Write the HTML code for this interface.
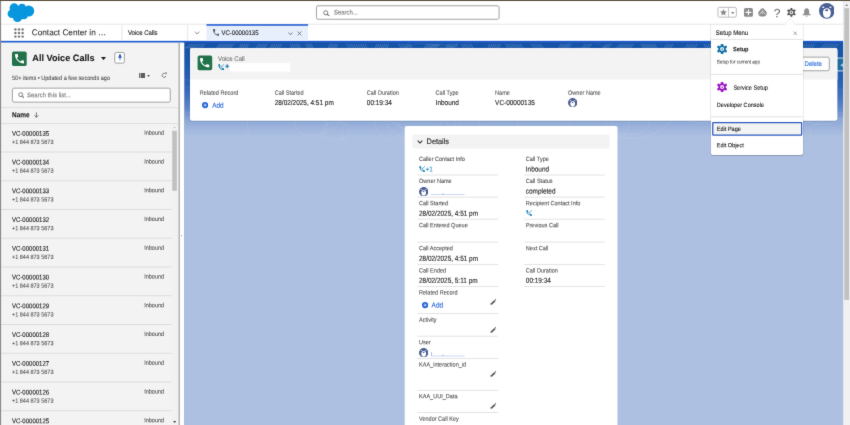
<!DOCTYPE html>
<html lang="en">
<head>
<meta charset="utf-8">
<title>VC-00000135 | Voice Call | Salesforce</title>
<style>
html,body{margin:0;padding:0;}
body{width:850px;height:425px;overflow:hidden;background:#adc0e1;font-family:"Liberation Sans",Arial,Helvetica,sans-serif;}
#app{position:relative;filter:url(#soft);width:850px;height:425px;overflow:hidden;background:#adc0e1;}
ul,li{margin:0;padding:0;list-style:none;}
.b{position:absolute;display:block;}
.t{position:absolute;display:block;line-height:1;white-space:nowrap;transform-origin:0 0;-webkit-text-stroke:0.09px currentColor;}
</style>
</head>
<body>
<svg class="b" width="0" height="0" aria-hidden="true"><defs><filter id="soft" x="0" y="0" width="100%" height="100%" color-interpolation-filters="sRGB"><feConvolveMatrix order="3" kernelMatrix="0.015 0.065 0.015 0.065 0.68 0.065 0.015 0.065 0.015" divisor="1" edgeMode="duplicate" preserveAlpha="true"/></filter></defs></svg>
<div id="app">
<main id="record-page">
<div class="b" style="left:184px;top:42px;width:660px;height:383px;background:linear-gradient(to bottom,#1653a6 0,#1855a7 8px,#1d59aa 22px,#2d64b4 44px,#4674be 56px,#5f84c8 66px,#8ea9d6 79px,#a1b6dd 87px,#adc0e1 95px,#adc0e1 100%);"></div>
<svg class="b" style="left:184px;top:42px;" width="660" height="100" viewBox="0 0 660 100"><g fill="none" stroke="#fff" stroke-opacity="0.36" stroke-width="0.5"><path d="M2.0 6.4 l3.8 -4.6"/><path d="M4.2 6.4 l3.8 -4.6"/><path d="M6.4 6.4 l3.8 -4.6"/><path d="M8.5 6.4 l3.8 -4.6"/><path d="M10.7 6.4 l3.8 -4.6"/><path d="M12.9 6.4 l3.8 -4.6"/><path d="M15.1 6.4 l3.8 -4.6"/><path d="M17.2 6.4 l3.8 -4.6"/><path d="M31.9 6.4 l4.4 -4.6"/><path d="M33.6 6.4 l4.4 -4.6"/><path d="M35.3 6.4 l4.4 -4.6"/><path d="M37.1 6.4 l4.4 -4.6"/><path d="M38.8 6.4 l4.4 -4.6"/><path d="M40.5 6.4 l4.4 -4.6"/><path d="M42.2 6.4 l4.4 -4.6"/><path d="M43.9 6.4 l4.4 -4.6"/><path d="M45.6 6.4 l4.4 -4.6"/><path d="M55.5 6.4 l1.8 -4.6"/><path d="M57.3 6.4 l1.8 -4.6"/><path d="M59.1 6.4 l1.8 -4.6"/><path d="M60.9 6.4 l1.8 -4.6"/><path d="M62.7 6.4 l1.8 -4.6"/><path d="M71.9 6.4 l3.2 -4.6"/><path d="M73.9 6.4 l3.2 -4.6"/><path d="M76.0 6.4 l3.2 -4.6"/><path d="M78.0 6.4 l3.2 -4.6"/><path d="M80.0 6.4 l3.2 -4.6"/><path d="M86.2 6.4 l2.4 -4.6"/><path d="M88.5 6.4 l2.4 -4.6"/><path d="M90.7 6.4 l2.4 -4.6"/><path d="M93.0 6.4 l2.4 -4.6"/><path d="M95.2 6.4 l2.4 -4.6"/><path d="M108.3 6.4 l-2.0 -4.6"/><path d="M110.4 6.4 l-2.0 -4.6"/><path d="M112.5 6.4 l-2.0 -4.6"/><path d="M114.6 6.4 l-2.0 -4.6"/><path d="M116.6 6.4 l-2.0 -4.6"/><path d="M123.8 6.4 l-2.2 -4.6"/><path d="M125.7 6.4 l-2.2 -4.6"/><path d="M127.5 6.4 l-2.2 -4.6"/><path d="M129.3 6.4 l-2.2 -4.6"/><path d="M144.0 6.4 l2.5 -4.6"/><path d="M145.8 6.4 l2.5 -4.6"/><path d="M147.6 6.4 l2.5 -4.6"/><path d="M149.5 6.4 l2.5 -4.6"/><path d="M151.3 6.4 l2.5 -4.6"/><path d="M165.0 6.4 l-2.2 -4.6"/><path d="M167.3 6.4 l-2.2 -4.6"/><path d="M169.5 6.4 l-2.2 -4.6"/><path d="M171.8 6.4 l-2.2 -4.6"/><path d="M174.1 6.4 l-2.2 -4.6"/><path d="M176.4 6.4 l-2.2 -4.6"/><path d="M178.7 6.4 l-2.2 -4.6"/><path d="M180.9 6.4 l-2.2 -4.6"/><path d="M183.2 6.4 l-2.2 -4.6"/><path d="M191.3 6.4 l1.7 -4.6"/><path d="M193.2 6.4 l1.7 -4.6"/><path d="M195.2 6.4 l1.7 -4.6"/><path d="M197.1 6.4 l1.7 -4.6"/><path d="M199.1 6.4 l1.7 -4.6"/><path d="M201.0 6.4 l1.7 -4.6"/><path d="M203.0 6.4 l1.7 -4.6"/><path d="M217.3 6.4 l-2.6 -4.6"/><path d="M219.5 6.4 l-2.6 -4.6"/><path d="M221.7 6.4 l-2.6 -4.6"/><path d="M223.9 6.4 l-2.6 -4.6"/><path d="M226.1 6.4 l-2.6 -4.6"/><path d="M228.3 6.4 l-2.6 -4.6"/><path d="M239.8 6.4 l3.7 -4.6"/><path d="M241.5 6.4 l3.7 -4.6"/><path d="M243.2 6.4 l3.7 -4.6"/><path d="M245.0 6.4 l3.7 -4.6"/><path d="M246.7 6.4 l3.7 -4.6"/><path d="M248.5 6.4 l3.7 -4.6"/><path d="M250.2 6.4 l3.7 -4.6"/><path d="M251.9 6.4 l3.7 -4.6"/><path d="M260.9 6.4 l3.7 -4.6"/><path d="M262.7 6.4 l3.7 -4.6"/><path d="M264.5 6.4 l3.7 -4.6"/><path d="M266.3 6.4 l3.7 -4.6"/><path d="M268.1 6.4 l3.7 -4.6"/><path d="M269.9 6.4 l3.7 -4.6"/><path d="M280.0 6.4 l-2.4 -4.6"/><path d="M282.3 6.4 l-2.4 -4.6"/><path d="M284.5 6.4 l-2.4 -4.6"/><path d="M286.8 6.4 l-2.4 -4.6"/><path d="M289.0 6.4 l-2.4 -4.6"/><path d="M303.9 6.4 l1.7 -4.6"/><path d="M306.0 6.4 l1.7 -4.6"/><path d="M308.2 6.4 l1.7 -4.6"/><path d="M310.4 6.4 l1.7 -4.6"/><path d="M312.5 6.4 l1.7 -4.6"/><path d="M314.7 6.4 l1.7 -4.6"/><path d="M324.2 6.4 l-3.0 -4.6"/><path d="M326.3 6.4 l-3.0 -4.6"/><path d="M328.4 6.4 l-3.0 -4.6"/><path d="M330.6 6.4 l-3.0 -4.6"/><path d="M332.7 6.4 l-3.0 -4.6"/><path d="M334.8 6.4 l-3.0 -4.6"/><path d="M336.9 6.4 l-3.0 -4.6"/><path d="M339.1 6.4 l-3.0 -4.6"/><path d="M350.8 6.4 l-3.9 -4.6"/><path d="M353.1 6.4 l-3.9 -4.6"/><path d="M355.3 6.4 l-3.9 -4.6"/><path d="M357.6 6.4 l-3.9 -4.6"/><path d="M359.8 6.4 l-3.9 -4.6"/><path d="M374.6 6.4 l2.7 -4.6"/><path d="M376.6 6.4 l2.7 -4.6"/><path d="M378.6 6.4 l2.7 -4.6"/><path d="M380.6 6.4 l2.7 -4.6"/><path d="M382.6 6.4 l2.7 -4.6"/><path d="M384.6 6.4 l2.7 -4.6"/><path d="M397.6 6.4 l3.8 -4.6"/><path d="M399.8 6.4 l3.8 -4.6"/><path d="M402.0 6.4 l3.8 -4.6"/><path d="M404.2 6.4 l3.8 -4.6"/><path d="M418.1 6.4 l4.4 -4.6"/><path d="M419.8 6.4 l4.4 -4.6"/><path d="M421.6 6.4 l4.4 -4.6"/><path d="M423.3 6.4 l4.4 -4.6"/><path d="M432.2 6.4 l4.4 -4.6"/><path d="M434.1 6.4 l4.4 -4.6"/><path d="M436.0 6.4 l4.4 -4.6"/><path d="M437.9 6.4 l4.4 -4.6"/><path d="M439.8 6.4 l4.4 -4.6"/><path d="M441.7 6.4 l4.4 -4.6"/><path d="M443.6 6.4 l4.4 -4.6"/><path d="M445.5 6.4 l4.4 -4.6"/><path d="M459.7 6.4 l-2.5 -4.6"/><path d="M461.6 6.4 l-2.5 -4.6"/><path d="M463.5 6.4 l-2.5 -4.6"/><path d="M465.4 6.4 l-2.5 -4.6"/><path d="M467.3 6.4 l-2.5 -4.6"/><path d="M469.2 6.4 l-2.5 -4.6"/><path d="M471.1 6.4 l-2.5 -4.6"/><path d="M472.9 6.4 l-2.5 -4.6"/><path d="M480.4 6.4 l2.1 -4.6"/><path d="M482.6 6.4 l2.1 -4.6"/><path d="M484.7 6.4 l2.1 -4.6"/><path d="M486.8 6.4 l2.1 -4.6"/><path d="M501.9 6.4 l1.8 -4.6"/><path d="M504.2 6.4 l1.8 -4.6"/><path d="M506.4 6.4 l1.8 -4.6"/><path d="M508.7 6.4 l1.8 -4.6"/><path d="M511.0 6.4 l1.8 -4.6"/><path d="M522.1 6.4 l-2.3 -4.6"/><path d="M524.2 6.4 l-2.3 -4.6"/><path d="M526.2 6.4 l-2.3 -4.6"/><path d="M528.3 6.4 l-2.3 -4.6"/><path d="M530.3 6.4 l-2.3 -4.6"/><path d="M532.4 6.4 l-2.3 -4.6"/><path d="M534.5 6.4 l-2.3 -4.6"/><path d="M548.0 6.4 l2.9 -4.6"/><path d="M549.7 6.4 l2.9 -4.6"/><path d="M551.4 6.4 l2.9 -4.6"/><path d="M553.2 6.4 l2.9 -4.6"/><path d="M554.9 6.4 l2.9 -4.6"/><path d="M556.6 6.4 l2.9 -4.6"/><path d="M558.4 6.4 l2.9 -4.6"/><path d="M572.3 6.4 l2.6 -4.6"/><path d="M574.2 6.4 l2.6 -4.6"/><path d="M576.0 6.4 l2.6 -4.6"/><path d="M577.8 6.4 l2.6 -4.6"/><path d="M592.5 6.4 l-3.5 -4.6"/><path d="M594.6 6.4 l-3.5 -4.6"/><path d="M596.8 6.4 l-3.5 -4.6"/><path d="M599.0 6.4 l-3.5 -4.6"/><path d="M601.2 6.4 l-3.5 -4.6"/><path d="M603.3 6.4 l-3.5 -4.6"/><path d="M605.5 6.4 l-3.5 -4.6"/><path d="M607.7 6.4 l-3.5 -4.6"/><path d="M614.8 6.4 l2.1 -4.6"/><path d="M617.0 6.4 l2.1 -4.6"/><path d="M619.2 6.4 l2.1 -4.6"/><path d="M621.4 6.4 l2.1 -4.6"/><path d="M623.6 6.4 l2.1 -4.6"/><path d="M625.8 6.4 l2.1 -4.6"/><path d="M628.0 6.4 l2.1 -4.6"/><path d="M636.9 6.4 l4.2 -4.6"/><path d="M639.2 6.4 l4.2 -4.6"/><path d="M641.5 6.4 l4.2 -4.6"/><path d="M643.8 6.4 l4.2 -4.6"/><path d="M646.0 6.4 l4.2 -4.6"/><path d="M648.3 6.4 l4.2 -4.6"/><path d="M650.6 6.4 l4.2 -4.6"/></g><g fill="none" stroke="#fff" stroke-opacity="0.11" stroke-width="0.7"><ellipse cx="321.9" cy="73.7" rx="27.4" ry="17.1" transform="rotate(-15 321.9 73.7)"/><ellipse cx="264.6" cy="21.2" rx="24.7" ry="15.4" transform="rotate(34 264.6 21.2)"/><ellipse cx="642.7" cy="64.4" rx="28.0" ry="17.5" transform="rotate(-11 642.7 64.4)"/><ellipse cx="50.6" cy="32.5" rx="35.7" ry="22.3" transform="rotate(26 50.6 32.5)"/><ellipse cx="235.7" cy="78.7" rx="35.5" ry="22.2" transform="rotate(14 235.7 78.7)"/><ellipse cx="441.5" cy="76.4" rx="24.3" ry="15.2" transform="rotate(14 441.5 76.4)"/><ellipse cx="181.0" cy="51.7" rx="35.3" ry="22.1" transform="rotate(13 181.0 51.7)"/><ellipse cx="189.8" cy="93.1" rx="32.1" ry="20.0" transform="rotate(6 189.8 93.1)"/><ellipse cx="-2.1" cy="57.2" rx="21.2" ry="13.3" transform="rotate(12 -2.1 57.2)"/><ellipse cx="304.8" cy="81.5" rx="32.0" ry="20.0" transform="rotate(21 304.8 81.5)"/><ellipse cx="226.6" cy="66.0" rx="34.5" ry="21.5" transform="rotate(23 226.6 66.0)"/><ellipse cx="228.0" cy="83.9" rx="38.1" ry="23.8" transform="rotate(13 228.0 83.9)"/><ellipse cx="653.8" cy="94.1" rx="28.5" ry="17.8" transform="rotate(2 653.8 94.1)"/><ellipse cx="103.0" cy="83.3" rx="39.9" ry="24.9" transform="rotate(-2 103.0 83.3)"/><ellipse cx="460.2" cy="72.8" rx="34.3" ry="21.4" transform="rotate(-23 460.2 72.8)"/><ellipse cx="520.7" cy="60.3" rx="32.5" ry="20.3" transform="rotate(-6 520.7 60.3)"/><ellipse cx="414.1" cy="77.7" rx="31.7" ry="19.8" transform="rotate(15 414.1 77.7)"/><ellipse cx="8.8" cy="22.4" rx="26.4" ry="16.5" transform="rotate(11 8.8 22.4)"/><ellipse cx="138.9" cy="69.7" rx="31.6" ry="19.7" transform="rotate(-32 138.9 69.7)"/><ellipse cx="310.7" cy="28.4" rx="15.9" ry="9.9" transform="rotate(-26 310.7 28.4)"/><ellipse cx="205.8" cy="24.3" rx="19.7" ry="12.3" transform="rotate(-33 205.8 24.3)"/><ellipse cx="306.4" cy="42.2" rx="31.0" ry="19.4" transform="rotate(6 306.4 42.2)"/><ellipse cx="151.7" cy="89.3" rx="14.4" ry="9.0" transform="rotate(-7 151.7 89.3)"/><ellipse cx="179.4" cy="44.9" rx="17.5" ry="11.0" transform="rotate(23 179.4 44.9)"/><ellipse cx="244.2" cy="11.2" rx="31.1" ry="19.4" transform="rotate(-28 244.2 11.2)"/><ellipse cx="360.8" cy="38.5" rx="30.2" ry="18.9" transform="rotate(32 360.8 38.5)"/><ellipse cx="546.6" cy="45.7" rx="36.5" ry="22.8" transform="rotate(10 546.6 45.7)"/><ellipse cx="241.2" cy="20.8" rx="30.6" ry="19.1" transform="rotate(4 241.2 20.8)"/><ellipse cx="640.9" cy="95.1" rx="31.0" ry="19.3" transform="rotate(-10 640.9 95.1)"/><ellipse cx="597.6" cy="8.1" rx="17.3" ry="10.8" transform="rotate(5 597.6 8.1)"/><ellipse cx="408.3" cy="20.7" rx="31.5" ry="19.7" transform="rotate(27 408.3 20.7)"/><ellipse cx="245.6" cy="46.9" rx="20.6" ry="12.8" transform="rotate(-15 245.6 46.9)"/><ellipse cx="651.3" cy="42.2" rx="40.5" ry="25.3" transform="rotate(29 651.3 42.2)"/><ellipse cx="395.2" cy="31.4" rx="41.1" ry="25.7" transform="rotate(-0 395.2 31.4)"/></g></svg>
<section id="record-header" aria-label="Voice Call">
<svg class="b" style="left:188px;top:46px" width="652" height="77"><rect x="1.7" y="2.3" width="648" height="73.4" rx="2.3" fill="rgba(0,0,0,0.1)"/><rect x="2" y="2.1" width="647.4" height="72.7" rx="2" fill="#fff"/></svg>
<svg class="b" style="left:188px;top:46px" width="652" height="36"><path d="M4 2.1 H647.4 A2 2 0 0 1 649.4 4.1 V33.4 H2 V4.1 A2 2 0 0 1 4 2.1 Z" fill="#f3f3f3"/></svg>
<svg class="b" style="left:195px;top:53px" width="20" height="20"><rect x="2.6" y="2.6" width="14.6" height="14.6" rx="1.8" fill="#22714a"/></svg>
<svg class="b" style="left:200.33px;top:58.33px;" width="9.34" height="9.34" viewBox="3 3 18 18"><path fill="#fff" d="M6.6 10.8c1.4 2.8 3.8 5.1 6.6 6.6l2.2-2.2c.3-.3.7-.4 1-.2 1.1.4 2.3.6 3.6.6.6 0 1 .4 1 1V20c0 .6-.4 1-1 1C10.600 21 3 13.400 3 4c0-.6.4-1 1-1h3.500c.6 0 1 .4 1 1 0 1.300.2 2.500.6 3.600.1.300 0 .7-.3 1l-2.200 2.200z"/></svg>
<span class="t" style="left:218px;top:56px;font-size:6px;color:#747474;transform:translate(0px,-0.6px) rotate(.03deg) scale(1,1.12);">Voice Call</span>
<svg class="b" style="left:217.8px;top:63.8px;" width="6.4" height="6.4" viewBox="2 2 20 20"><path fill="#0b7ab0" d="M6.6 10.8c1.4 2.8 3.8 5.1 6.6 6.6l2.2-2.2c.3-.3.7-.4 1-.2 1.1.4 2.3.6 3.6.6.6 0 1 .4 1 1V20c0 .6-.4 1-1 1C10.600 21 3 13.400 3 4c0-.6.4-1 1-1h3.500c.6 0 1 .4 1 1 0 1.300.2 2.500.6 3.600.1.300 0 .7-.3 1l-2.200 2.200z"/><path d="M21.500 2.500 L11.500 12.500" fill="none" stroke="#0b7ab0" stroke-width="2.600" stroke-opacity="0.8"/><path d="M11 7.500 V13 H16.500" fill="none" stroke="#0b7ab0" stroke-width="1.800" stroke-opacity="0.6"/></svg>
<svg class="b" style="left:224.7px;top:64.3px;" width="4.4" height="4.4" viewBox="0 0 10 10"><path d="M5 0.500 V9.500 M0.500 5 H9.500" stroke="#0b7ab0" stroke-width="2.400" fill="none"/></svg>
<svg class="b" style="left:227px;top:61px" width="65" height="13"><rect x="2.8" y="2.1" width="60.2" height="8.5" fill="#fff"/></svg>
<span class="t" style="left:199px;top:90px;font-size:5.55px;color:#525252;transform:translate(0.8px,0.22px) rotate(.03deg) scale(1,1.12);">Related Record</span>
<span class="t" style="left:274px;top:90px;font-size:5.55px;color:#525252;transform:translate(0.7px,0.22px) rotate(.03deg) scale(1,1.12);">Call Started</span>
<span class="t" style="left:274px;top:100px;font-size:6.45px;color:#181818;transform:translate(0.7px,-0.6px) rotate(.03deg) scale(1,1.12);">28/02/2025, 4:51 pm</span>
<span class="t" style="left:366px;top:90px;font-size:5.55px;color:#525252;transform:translate(0.8px,0.22px) rotate(.03deg) scale(1,1.12);">Call Duration</span>
<span class="t" style="left:366px;top:100px;font-size:6.45px;color:#181818;transform:translate(0.8px,-0.6px) rotate(.03deg) scale(1,1.12);">00:19:34</span>
<span class="t" style="left:435px;top:90px;font-size:5.55px;color:#525252;transform:translate(0.6px,0.22px) rotate(.03deg) scale(1,1.12);">Call Type</span>
<span class="t" style="left:435px;top:100px;font-size:6.45px;color:#181818;transform:translate(0.6px,-0.6px) rotate(.03deg) scale(1,1.12);">Inbound</span>
<span class="t" style="left:495px;top:90px;font-size:5.55px;color:#525252;transform:translate(0.1px,0.22px) rotate(.03deg) scale(1,1.12);">Name</span>
<span class="t" style="left:495px;top:100px;font-size:6.45px;color:#181818;transform:translate(0.1px,-0.6px) rotate(.03deg) scale(1,1.12);">VC-00000135</span>
<span class="t" style="left:568px;top:90px;font-size:5.55px;color:#525252;transform:translate(0px,0.22px) rotate(.03deg) scale(1,1.12);">Owner Name</span>
<svg class="b" style="left:202px;top:102.4px;" width="6.2" height="6.2" viewBox="0 0 20 20"><circle cx="10" cy="10" r="10" fill="#1f5fd6"/><path d="M10 4.800v10.400M4.800 10h10.400" stroke="#fff" stroke-width="2.200" fill="none"/></svg>
<span class="t" style="left:212px;top:102px;font-size:6.45px;color:#1f5fd6;transform:translate(0.2px,0.15px) rotate(.03deg) scale(1,1.12);">Add</span>
<svg class="b" style="left:568px;top:97.7px;" width="9.4" height="9.4" viewBox="0 0 100 100"><circle cx="50" cy="50" r="50" fill="#4a5f94"/><path d="M50 33 C67 33 75 43 75 62 C75 82 66 94 50 94 C34 94 25 82 25 62 C25 43 33 33 50 33Z" fill="#fff"/><ellipse cx="27" cy="27" rx="7" ry="4.500" fill="#fff"/><ellipse cx="73" cy="27" rx="7" ry="4.500" fill="#fff"/><ellipse cx="49" cy="46" rx="10.500" ry="6" fill="#4a5f94"/></svg>
<svg class="b" style="left:768px;top:54px" width="64" height="20"><rect x="2.45" y="3.15" width="58.8" height="13.6" rx="1.55" fill="#fff" stroke="#999999" stroke-width="0.9"/></svg>
<span class="t" style="left:804px;top:61px;font-size:6px;color:#2a6adc;transform:translate(0.6px,-0.6px) rotate(.03deg) scale(1,1.12);">Delete</span>
<svg class="b" style="left:833px;top:55px" width="13" height="19"><path d="M4.1 2.4 H10.2 V16.5 H4.1 A1.6 1.6 0 0 1 2.5 14.9 V4 A1.6 1.6 0 0 1 4.1 2.4 Z" fill="rgba(255,255,255,0.62)"/></svg>
<svg class="b" style="left:835px;top:56px" width="11" height="17"><rect x="2.6" y="2.7" width="5.6" height="11.5" fill="#1f6b9f"/></svg>
<svg class="b" style="left:840px;top:62.7px;" width="3" height="4.4" viewBox="0 0 8 10"><path d="M8 0 L0.500 5 L8 10Z" fill="#9cc3de"/></svg>
</section>
<section id="record-details" aria-label="Details">
<svg class="b" style="left:402px;top:124px" width="218" height="309"><rect x="2.3" y="2.2" width="213.6" height="305.7" rx="2.3" fill="rgba(0,0,0,0.1)"/><rect x="2.6" y="2" width="213" height="305" rx="2" fill="#fff"/></svg>
<svg class="b" style="left:410px;top:132px" width="202" height="19"><rect x="2.4" y="2.4" width="197.2" height="14.2" rx="1.8" fill="#f3f3f3"/></svg>
<svg class="b" style="left:416.7px;top:139.5px;" width="6" height="4" viewBox="0 0 10 7"><path d="M1 1.200 L5 5.400 L9 1.200" fill="none" stroke="#2a2a2a" stroke-width="1.8"/></svg>
<span class="t" style="left:426px;top:138px;font-size:7.35px;color:#181818;transform:translate(0.6px,-0.42px) rotate(.03deg) scale(1,1.07);">Details</span>
<span class="t" style="left:419px;top:157px;font-size:5.55px;color:#525252;transform:translate(0px,-0.43px) rotate(.03deg) scale(1,1.12);">Caller Contact Info</span>
<svg class="b" style="left:418.8px;top:165.55px;" width="6.2" height="6.2" viewBox="2 2 20 20"><path fill="#0b7ab0" d="M6.6 10.8c1.4 2.8 3.8 5.1 6.6 6.6l2.2-2.2c.3-.3.7-.4 1-.2 1.1.4 2.3.6 3.6.6.6 0 1 .4 1 1V20c0 .6-.4 1-1 1C10.600 21 3 13.400 3 4c0-.6.4-1 1-1h3.500c.6 0 1 .4 1 1 0 1.300.2 2.500.6 3.600.1.300 0 .7-.3 1l-2.200 2.200z"/><path d="M21.500 2.500 L11.500 12.500" fill="none" stroke="#0b7ab0" stroke-width="2.600" stroke-opacity="0.8"/><path d="M11 7.500 V13 H16.500" fill="none" stroke="#0b7ab0" stroke-width="1.800" stroke-opacity="0.6"/></svg>
<span class="t" style="left:425px;top:166px;font-size:6.3px;color:#2b8dc1;transform:translate(0.6px,-0.15px) rotate(.03deg) scale(1,1.12);">+1</span>
<svg class="b" style="left:415px;top:172px" width="85" height="6"><rect x="2.4" y="2.55" width="80.6" height="0.9" fill="#e0e0e0"/></svg>
<span class="t" style="left:419px;top:179px;font-size:5.55px;color:#525252;transform:translate(0px,-0.43px) rotate(.03deg) scale(1,1.12);">Owner Name</span>
<svg class="b" style="left:418.9px;top:186.7px;" width="9.4" height="9.4" viewBox="0 0 100 100"><circle cx="50" cy="50" r="50" fill="#4a5f94"/><path d="M50 33 C67 33 75 43 75 62 C75 82 66 94 50 94 C34 94 25 82 25 62 C25 43 33 33 50 33Z" fill="#fff"/><ellipse cx="27" cy="27" rx="7" ry="4.500" fill="#fff"/><ellipse cx="73" cy="27" rx="7" ry="4.500" fill="#fff"/><ellipse cx="49" cy="46" rx="10.500" ry="6" fill="#4a5f94"/></svg>
<svg class="b" style="left:429px;top:192px" width="38" height="5"><rect x="2" y="2.4" width="33.6" height="0.6" fill="#a9bdec"/></svg>
<svg class="b" style="left:440px;top:191px" width="6" height="6"><rect x="2.4" y="2.5" width="1.1" height="1.1" fill="#8ea6e4"/></svg>
<svg class="b" style="left:415px;top:194px" width="85" height="6"><rect x="2.4" y="2.65" width="80.6" height="0.9" fill="#e0e0e0"/></svg>
<span class="t" style="left:419px;top:201px;font-size:5.55px;color:#525252;transform:translate(0px,-0.33px) rotate(.03deg) scale(1,1.12);">Call Started</span>
<span class="t" style="left:419px;top:210px;font-size:6.45px;color:#181818;transform:translate(0px,0.05px) rotate(.03deg) scale(1,1.12);">28/02/2025, 4:51 pm</span>
<svg class="b" style="left:415px;top:216px" width="85" height="6"><rect x="2.4" y="2.75" width="80.6" height="0.9" fill="#e0e0e0"/></svg>
<span class="t" style="left:419px;top:223px;font-size:5.55px;color:#525252;transform:translate(0px,-0.23px) rotate(.03deg) scale(1,1.12);">Call Entered Queue</span>
<svg class="b" style="left:415px;top:239px" width="85" height="6"><rect x="2.4" y="2.65" width="80.6" height="0.9" fill="#e0e0e0"/></svg>
<span class="t" style="left:419px;top:246px;font-size:5.55px;color:#525252;transform:translate(0px,-0.33px) rotate(.03deg) scale(1,1.12);">Call Accepted</span>
<span class="t" style="left:419px;top:255px;font-size:6.45px;color:#181818;transform:translate(0px,0.25px) rotate(.03deg) scale(1,1.12);">28/02/2025, 4:51 pm</span>
<svg class="b" style="left:415px;top:261px" width="85" height="6"><rect x="2.4" y="2.95" width="80.6" height="0.9" fill="#e0e0e0"/></svg>
<span class="t" style="left:419px;top:268px;font-size:5.55px;color:#525252;transform:translate(0px,-0.03px) rotate(.03deg) scale(1,1.12);">Call Ended</span>
<span class="t" style="left:419px;top:277px;font-size:6.45px;color:#181818;transform:translate(0px,0.25px) rotate(.03deg) scale(1,1.12);">28/02/2025, 5:11 pm</span>
<svg class="b" style="left:415px;top:283px" width="85" height="6"><rect x="2.4" y="2.95" width="80.6" height="0.9" fill="#e0e0e0"/></svg>
<span class="t" style="left:419px;top:290px;font-size:5.55px;color:#525252;transform:translate(0px,-0.03px) rotate(.03deg) scale(1,1.12);">Related Record</span>
<svg class="b" style="left:421.8px;top:302.4px;" width="6.2" height="6.2" viewBox="0 0 20 20"><circle cx="10" cy="10" r="10" fill="#1f5fd6"/><path d="M10 4.800v10.400M4.800 10h10.400" stroke="#fff" stroke-width="2.200" fill="none"/></svg>
<span class="t" style="left:431px;top:302px;font-size:6.45px;color:#1f5fd6;transform:translate(0.6px,0px) rotate(.03deg) scale(1,1.12);">Add</span>
<svg class="b" style="left:489.5px;top:299.2px;" width="6.5" height="6.5" viewBox="0 0 20 20"><path d="M1.500 18.500 L2.800 13.200 L13.200 2.800 L17.200 6.800 L6.800 17.200Z" fill="#5c5c5c"/><path d="M14.400 1.600 L15.600 0.500 Q16.800 -0.200 17.900 0.800 L19.300 2.200 Q20.200 3.300 19.400 4.400 L18.400 5.600Z" fill="#5c5c5c"/></svg>
<svg class="b" style="left:415px;top:311px" width="85" height="6"><rect x="2.4" y="2.15" width="80.6" height="0.9" fill="#e0e0e0"/></svg>
<span class="t" style="left:419px;top:317px;font-size:5.55px;color:#525252;transform:translate(0px,0.17px) rotate(.03deg) scale(1,1.12);">Activity</span>
<svg class="b" style="left:489.5px;top:326.7px;" width="6.5" height="6.5" viewBox="0 0 20 20"><path d="M1.500 18.500 L2.800 13.200 L13.200 2.800 L17.200 6.800 L6.800 17.200Z" fill="#5c5c5c"/><path d="M14.400 1.600 L15.600 0.500 Q16.800 -0.200 17.900 0.800 L19.300 2.200 Q20.200 3.300 19.400 4.400 L18.400 5.600Z" fill="#5c5c5c"/></svg>
<svg class="b" style="left:415px;top:333px" width="85" height="6"><rect x="2.4" y="2.75" width="80.6" height="0.9" fill="#e0e0e0"/></svg>
<span class="t" style="left:419px;top:340px;font-size:5.55px;color:#525252;transform:translate(0px,-0.23px) rotate(.03deg) scale(1,1.12);">User</span>
<svg class="b" style="left:418.9px;top:348px;" width="9.4" height="9.4" viewBox="0 0 100 100"><circle cx="50" cy="50" r="50" fill="#4a5f94"/><path d="M50 33 C67 33 75 43 75 62 C75 82 66 94 50 94 C34 94 25 82 25 62 C25 43 33 33 50 33Z" fill="#fff"/><ellipse cx="27" cy="27" rx="7" ry="4.500" fill="#fff"/><ellipse cx="73" cy="27" rx="7" ry="4.500" fill="#fff"/><ellipse cx="49" cy="46" rx="10.500" ry="6" fill="#4a5f94"/></svg>
<svg class="b" style="left:429px;top:353px" width="38" height="6"><rect x="2" y="2.7" width="33.6" height="0.6" fill="#a9bdec"/></svg>
<svg class="b" style="left:429px;top:350px" width="5" height="8"><rect x="2" y="2" width="0.7" height="3.8" fill="#8ea6e4"/></svg>
<svg class="b" style="left:440px;top:352px" width="6" height="6"><rect x="2.4" y="2.8" width="1.1" height="1.1" fill="#8ea6e4"/></svg>
<svg class="b" style="left:415px;top:355px" width="85" height="6"><rect x="2.4" y="2.95" width="80.6" height="0.9" fill="#e0e0e0"/></svg>
<span class="t" style="left:419px;top:362px;font-size:5.55px;color:#525252;transform:translate(0px,-0.03px) rotate(.03deg) scale(1,1.12);">KAA_interaction_id</span>
<svg class="b" style="left:489.5px;top:370.6px;" width="6.5" height="6.5" viewBox="0 0 20 20"><path d="M1.500 18.500 L2.800 13.200 L13.200 2.800 L17.200 6.800 L6.800 17.200Z" fill="#5c5c5c"/><path d="M14.400 1.600 L15.600 0.500 Q16.800 -0.200 17.900 0.800 L19.300 2.200 Q20.200 3.300 19.400 4.400 L18.400 5.600Z" fill="#5c5c5c"/></svg>
<svg class="b" style="left:415px;top:387px" width="85" height="6"><rect x="2.4" y="2.85" width="80.6" height="0.9" fill="#e0e0e0"/></svg>
<span class="t" style="left:419px;top:394px;font-size:5.55px;color:#525252;transform:translate(0px,-0.13px) rotate(.03deg) scale(1,1.12);">KAA_UUI_Data</span>
<svg class="b" style="left:489.5px;top:403.1px;" width="6.5" height="6.5" viewBox="0 0 20 20"><path d="M1.500 18.500 L2.800 13.200 L13.200 2.800 L17.200 6.800 L6.800 17.200Z" fill="#5c5c5c"/><path d="M14.400 1.600 L15.600 0.500 Q16.800 -0.200 17.900 0.800 L19.300 2.200 Q20.200 3.300 19.400 4.400 L18.400 5.600Z" fill="#5c5c5c"/></svg>
<svg class="b" style="left:415px;top:410px" width="85" height="6"><rect x="2.4" y="2.15" width="80.6" height="0.9" fill="#e0e0e0"/></svg>
<span class="t" style="left:419px;top:416px;font-size:5.55px;color:#525252;transform:translate(0px,0.17px) rotate(.03deg) scale(1,1.12);">Vendor Call Key</span>
<span class="t" style="left:525px;top:157px;font-size:5.55px;color:#525252;transform:translate(0.8px,-0.43px) rotate(.03deg) scale(1,1.12);">Call Type</span>
<span class="t" style="left:525px;top:166px;font-size:6.45px;color:#181818;transform:translate(0.8px,-0.15px) rotate(.03deg) scale(1,1.12);">Inbound</span>
<svg class="b" style="left:522px;top:172px" width="85" height="6"><rect x="2.2" y="2.55" width="80.5" height="0.9" fill="#e0e0e0"/></svg>
<span class="t" style="left:525px;top:179px;font-size:5.55px;color:#525252;transform:translate(0.8px,-0.43px) rotate(.03deg) scale(1,1.12);">Call Status</span>
<span class="t" style="left:525px;top:188px;font-size:6.45px;color:#181818;transform:translate(0.8px,-0.05px) rotate(.03deg) scale(1,1.12);">completed</span>
<svg class="b" style="left:522px;top:194px" width="85" height="6"><rect x="2.2" y="2.65" width="80.5" height="0.9" fill="#e0e0e0"/></svg>
<span class="t" style="left:525px;top:201px;font-size:5.55px;color:#525252;transform:translate(0.8px,-0.33px) rotate(.03deg) scale(1,1.12);">Recipient Contact Info</span>
<svg class="b" style="left:525.6px;top:209.75px;" width="6.2" height="6.2" viewBox="2 2 20 20"><path fill="#0b7ab0" d="M6.6 10.8c1.4 2.8 3.8 5.1 6.6 6.6l2.2-2.2c.3-.3.7-.4 1-.2 1.1.4 2.3.6 3.6.6.6 0 1 .4 1 1V20c0 .6-.4 1-1 1C10.600 21 3 13.400 3 4c0-.6.4-1 1-1h3.500c.6 0 1 .4 1 1 0 1.300.2 2.500.6 3.600.1.300 0 .7-.3 1l-2.200 2.200z"/><path d="M21.500 2.500 L11.500 12.500" fill="none" stroke="#0b7ab0" stroke-width="2.600" stroke-opacity="0.8"/><path d="M11 7.500 V13 H16.500" fill="none" stroke="#0b7ab0" stroke-width="1.800" stroke-opacity="0.6"/></svg>
<svg class="b" style="left:522px;top:216px" width="85" height="6"><rect x="2.2" y="2.75" width="80.5" height="0.9" fill="#e0e0e0"/></svg>
<span class="t" style="left:525px;top:223px;font-size:5.55px;color:#525252;transform:translate(0.8px,-0.23px) rotate(.03deg) scale(1,1.12);">Previous Call</span>
<svg class="b" style="left:522px;top:239px" width="85" height="6"><rect x="2.2" y="2.65" width="80.5" height="0.9" fill="#e0e0e0"/></svg>
<span class="t" style="left:525px;top:246px;font-size:5.55px;color:#525252;transform:translate(0.8px,-0.33px) rotate(.03deg) scale(1,1.12);">Next Call</span>
<svg class="b" style="left:522px;top:261px" width="85" height="6"><rect x="2.2" y="2.95" width="80.5" height="0.9" fill="#e0e0e0"/></svg>
<span class="t" style="left:525px;top:268px;font-size:5.55px;color:#525252;transform:translate(0.8px,-0.03px) rotate(.03deg) scale(1,1.12);">Call Duration</span>
<span class="t" style="left:525px;top:277px;font-size:6.45px;color:#181818;transform:translate(0.8px,0.25px) rotate(.03deg) scale(1,1.12);">00:19:34</span>
<svg class="b" style="left:522px;top:283px" width="85" height="6"><rect x="2.2" y="2.95" width="80.5" height="0.9" fill="#e0e0e0"/></svg>
</section>
</main>
<aside id="list-panel" aria-label="All Voice Calls">
<svg class="b" style="left:-2px;top:40px" width="189" height="388"><rect x="2" y="2.4" width="184.35" height="383" fill="#fff"/></svg>
<svg class="b" style="left:-1px;top:41px" width="181" height="387"><rect x="2" y="2" width="177" height="383" fill="#f3f3f3"/></svg>
<div class="b" style="left:178px;top:43px;width:1px;height:382px;background:#cfcfcf;"></div>
<div class="b" style="left:179px;top:43px;width:1px;height:382px;background:#b4b4b4;"></div>
<svg class="b" style="left:182px;top:40px" width="5" height="388"><rect x="2.2" y="2.7" width="0.6" height="383" fill="rgba(40,80,150,0.3)"/></svg>
<svg class="b" style="left:180.7px;top:234px;" width="1.6" height="3" viewBox="0 0 5 10"><path d="M5 0 L0 5 L5 10Z" fill="#777"/></svg>
<svg class="b" style="left:10px;top:49px" width="19" height="20"><rect x="2" y="2.4" width="14.7" height="14.7" rx="1.8" fill="#22714a"/></svg>
<svg class="b" style="left:14.75px;top:54.15px;" width="9.41" height="9.41" viewBox="3 3 18 18"><path fill="#fff" d="M6.6 10.8c1.4 2.8 3.8 5.1 6.6 6.6l2.2-2.2c.3-.3.7-.4 1-.2 1.1.4 2.3.6 3.6.6.6 0 1 .4 1 1V20c0 .6-.4 1-1 1C10.600 21 3 13.400 3 4c0-.6.4-1 1-1h3.500c.6 0 1 .4 1 1 0 1.300.2 2.500.6 3.600.1.300 0 .7-.3 1l-2.200 2.200z"/></svg>
<span class="t" style="left:32px;top:54px;font-size:9.17px;color:#181818;font-weight:700;transform:translate(0.3px,0px) rotate(.03deg);">All Voice Calls</span>
<svg class="b" style="left:100.6px;top:56.5px;" width="5" height="3.2" viewBox="0 0 10 6"><path d="M0 0 H10 L5 6Z" fill="#181818"/></svg>
<svg class="b" style="left:112px;top:50px" width="15" height="16"><rect x="2.75" y="2.45" width="9.6" height="10.7" rx="1.55" fill="#fff" stroke="#999999" stroke-width="0.9"/></svg>
<svg class="b" style="left:117.6px;top:54.4px;" width="4" height="7" viewBox="0 0 8 12"><path d="M2 0 H6 V3.600 L7.600 5.200 V6.600 H4.800 V10.800 L4 12 L3.200 10.800 V6.600 H0.400 V5.200 L2 3.600Z" fill="#2d55b4"/></svg>
<span class="t" style="left:12px;top:76px;font-size:5.55px;color:#525252;transform:translate(0px,-0.48px) rotate(.03deg) scale(1,1.12);">50+ items • Updated a few seconds ago</span>
<svg class="b" style="left:138.8px;top:72.7px;" width="6.3" height="5.5" viewBox="0 0 12 11"><rect x="0" y="0" width="2.600" height="11" fill="#5c5c5c"/><rect x="3.600" y="0" width="8.400" height="11" fill="#5c5c5c"/></svg>
<svg class="b" style="left:147.2px;top:74.9px;" width="3" height="2" viewBox="0 0 10 6"><path d="M0 0 H10 L5 6Z" fill="#5c5c5c"/></svg>
<svg class="b" style="left:161px;top:72.3px;" width="6" height="6.2" viewBox="0 0 20 20"><path d="M14.800 6.200 A6.600 6.600 0 1 0 16.600 12.600" fill="none" stroke="#5c5c5c" stroke-width="2.300"/><path d="M12.400 1 H19 V7.600Z" fill="#5c5c5c"/></svg>
<svg class="b" style="left:10px;top:85px" width="163" height="20"><rect x="2.45" y="3.15" width="157.8" height="14" rx="1.55" fill="#fff" stroke="#999999" stroke-width="0.9"/></svg>
<svg class="b" style="left:17.7px;top:92.3px;" width="6.6" height="6.6" viewBox="0 0 20 20"><circle cx="8.200" cy="8.200" r="6" fill="none" stroke="#747474" stroke-width="2.800"/><path d="M12.800 12.800 L18.200 18.200" stroke="#747474" stroke-width="3.200" stroke-linecap="round"/></svg>
<span class="t" style="left:27px;top:92px;font-size:6px;color:#7a7a7a;transform:translate(0px,-0.3px) rotate(.03deg) scale(1,1.12);">Search this list...</span>
<svg class="b" style="left:-1px;top:105px" width="181" height="6"><rect x="2" y="2.2" width="177" height="0.9" fill="#dcdcdc"/></svg>
<span class="t" style="left:12px;top:112px;font-size:6.45px;color:#181818;font-weight:700;transform:translate(0px,-0.35px) rotate(.03deg) scale(1,1.13);">Name</span>
<svg class="b" style="left:34px;top:112.1px;" width="4.8" height="6" viewBox="0 0 10 12"><path d="M5 0.500 V10.500 M1 6.800 L5 10.800 L9 6.800" fill="none" stroke="#444" stroke-width="1.500"/></svg>
<svg class="b" style="left:-1px;top:121px" width="181" height="5"><rect x="2" y="2" width="177" height="0.8" fill="#d9d9d9"/></svg>
<ul>
<li>
<span class="t" style="left:12px;top:130px;font-size:6.02px;color:#181818;transform:translate(0px,0.15px) rotate(.03deg) scale(1,1.12);">VC-00000135</span>
<span class="t" style="left:12px;top:140px;font-size:5.5px;color:#525252;transform:translate(0px,-0.43px) rotate(.03deg) scale(1,1.12);">+1 844 873 5673</span>
<span class="t" style="left:144px;top:130px;font-size:5.55px;color:#525252;transform:translate(0.14px,0.37px) rotate(.03deg) scale(1,1.12);">Inbound</span>
</li>
<li>
<span class="t" style="left:12px;top:159px;font-size:6.02px;color:#181818;transform:translate(0px,-0.1px) rotate(.03deg) scale(1,1.12);">VC-00000134</span>
<span class="t" style="left:12px;top:168px;font-size:5.5px;color:#525252;transform:translate(0px,0.32px) rotate(.03deg) scale(1,1.12);">+1 844 873 5673</span>
<span class="t" style="left:144px;top:159px;font-size:5.55px;color:#525252;transform:translate(0.14px,0.12px) rotate(.03deg) scale(1,1.12);">Inbound</span>
<svg class="b" style="left:-1px;top:149px" width="175" height="6"><rect x="2" y="2.55" width="170.4" height="0.9" fill="#dadada"/></svg>
</li>
<li>
<span class="t" style="left:12px;top:188px;font-size:6.02px;color:#181818;transform:translate(0px,-0.35px) rotate(.03deg) scale(1,1.12);">VC-00000133</span>
<span class="t" style="left:12px;top:197px;font-size:5.5px;color:#525252;transform:translate(0px,0.07px) rotate(.03deg) scale(1,1.12);">+1 844 873 5673</span>
<span class="t" style="left:144px;top:188px;font-size:5.55px;color:#525252;transform:translate(0.14px,-0.13px) rotate(.03deg) scale(1,1.12);">Inbound</span>
<svg class="b" style="left:-1px;top:178px" width="175" height="6"><rect x="2" y="2.3" width="170.4" height="0.9" fill="#dadada"/></svg>
</li>
<li>
<span class="t" style="left:12px;top:217px;font-size:6.02px;color:#181818;transform:translate(0px,-0.6px) rotate(.03deg) scale(1,1.12);">VC-00000132</span>
<span class="t" style="left:12px;top:226px;font-size:5.5px;color:#525252;transform:translate(0px,-0.18px) rotate(.03deg) scale(1,1.12);">+1 844 873 5673</span>
<span class="t" style="left:144px;top:217px;font-size:5.55px;color:#525252;transform:translate(0.14px,-0.38px) rotate(.03deg) scale(1,1.12);">Inbound</span>
<svg class="b" style="left:-1px;top:207px" width="175" height="5"><rect x="2" y="2.05" width="170.4" height="0.9" fill="#dadada"/></svg>
</li>
<li>
<span class="t" style="left:12px;top:245px;font-size:6.02px;color:#181818;transform:translate(0px,0.15px) rotate(.03deg) scale(1,1.12);">VC-00000131</span>
<span class="t" style="left:12px;top:255px;font-size:5.5px;color:#525252;transform:translate(0px,-0.43px) rotate(.03deg) scale(1,1.12);">+1 844 873 5673</span>
<span class="t" style="left:144px;top:245px;font-size:5.55px;color:#525252;transform:translate(0.14px,0.37px) rotate(.03deg) scale(1,1.12);">Inbound</span>
<svg class="b" style="left:-1px;top:235px" width="175" height="6"><rect x="2" y="2.8" width="170.4" height="0.9" fill="#dadada"/></svg>
</li>
<li>
<span class="t" style="left:12px;top:274px;font-size:6.02px;color:#181818;transform:translate(0px,-0.1px) rotate(.03deg) scale(1,1.12);">VC-00000130</span>
<span class="t" style="left:12px;top:283px;font-size:5.5px;color:#525252;transform:translate(0px,0.32px) rotate(.03deg) scale(1,1.12);">+1 844 873 5673</span>
<span class="t" style="left:144px;top:274px;font-size:5.55px;color:#525252;transform:translate(0.14px,0.12px) rotate(.03deg) scale(1,1.12);">Inbound</span>
<svg class="b" style="left:-1px;top:264px" width="175" height="6"><rect x="2" y="2.55" width="170.4" height="0.9" fill="#dadada"/></svg>
</li>
<li>
<span class="t" style="left:12px;top:303px;font-size:6.02px;color:#181818;transform:translate(0px,-0.35px) rotate(.03deg) scale(1,1.12);">VC-00000129</span>
<span class="t" style="left:12px;top:312px;font-size:5.5px;color:#525252;transform:translate(0px,0.07px) rotate(.03deg) scale(1,1.12);">+1 844 873 5673</span>
<span class="t" style="left:144px;top:303px;font-size:5.55px;color:#525252;transform:translate(0.14px,-0.13px) rotate(.03deg) scale(1,1.12);">Inbound</span>
<svg class="b" style="left:-1px;top:293px" width="175" height="6"><rect x="2" y="2.3" width="170.4" height="0.9" fill="#dadada"/></svg>
</li>
<li>
<span class="t" style="left:12px;top:332px;font-size:6.02px;color:#181818;transform:translate(0px,-0.6px) rotate(.03deg) scale(1,1.12);">VC-00000128</span>
<span class="t" style="left:12px;top:341px;font-size:5.5px;color:#525252;transform:translate(0px,-0.18px) rotate(.03deg) scale(1,1.12);">+1 844 873 5673</span>
<span class="t" style="left:144px;top:332px;font-size:5.55px;color:#525252;transform:translate(0.14px,-0.38px) rotate(.03deg) scale(1,1.12);">Inbound</span>
<svg class="b" style="left:-1px;top:322px" width="175" height="5"><rect x="2" y="2.05" width="170.4" height="0.9" fill="#dadada"/></svg>
</li>
<li>
<span class="t" style="left:12px;top:360px;font-size:6.02px;color:#181818;transform:translate(0px,0.15px) rotate(.03deg) scale(1,1.12);">VC-00000127</span>
<span class="t" style="left:12px;top:370px;font-size:5.5px;color:#525252;transform:translate(0px,-0.43px) rotate(.03deg) scale(1,1.12);">+1 844 873 5673</span>
<span class="t" style="left:144px;top:360px;font-size:5.55px;color:#525252;transform:translate(0.14px,0.37px) rotate(.03deg) scale(1,1.12);">Inbound</span>
<svg class="b" style="left:-1px;top:350px" width="175" height="6"><rect x="2" y="2.8" width="170.4" height="0.9" fill="#dadada"/></svg>
</li>
<li>
<span class="t" style="left:12px;top:389px;font-size:6.02px;color:#181818;transform:translate(0px,-0.1px) rotate(.03deg) scale(1,1.12);">VC-00000126</span>
<span class="t" style="left:12px;top:398px;font-size:5.5px;color:#525252;transform:translate(0px,0.32px) rotate(.03deg) scale(1,1.12);">+1 844 873 5673</span>
<span class="t" style="left:144px;top:389px;font-size:5.55px;color:#525252;transform:translate(0.14px,0.12px) rotate(.03deg) scale(1,1.12);">Inbound</span>
<svg class="b" style="left:-1px;top:379px" width="175" height="6"><rect x="2" y="2.55" width="170.4" height="0.9" fill="#dadada"/></svg>
</li>
<li>
<span class="t" style="left:12px;top:418px;font-size:6.02px;color:#181818;transform:translate(0px,-0.35px) rotate(.03deg) scale(1,1.12);">VC-00000125</span>
<span class="t" style="left:12px;top:427px;font-size:5.5px;color:#525252;transform:translate(0px,0.07px) rotate(.03deg) scale(1,1.12);">+1 844 873 5673</span>
<span class="t" style="left:144px;top:418px;font-size:5.55px;color:#525252;transform:translate(0.14px,-0.13px) rotate(.03deg) scale(1,1.12);">Inbound</span>
<svg class="b" style="left:-1px;top:408px" width="175" height="6"><rect x="2" y="2.3" width="170.4" height="0.9" fill="#dadada"/></svg>
</li>
</ul>
<svg class="b" style="left:169px;top:121px" width="11" height="307"><rect x="2.6" y="2.8" width="6.4" height="302" fill="#f1f1f1"/></svg>
<svg class="b" style="left:170px;top:128px" width="9" height="65"><rect x="2.2" y="2.8" width="4.7" height="60" fill="#c1c1c1"/></svg>
<svg class="b" style="left:173px;top:126.6px;" width="3" height="1.9" viewBox="0 0 10 6"><path d="M0 6 H10 L5 0Z" fill="#8a8a8a"/></svg>
<svg class="b" style="left:173px;top:421.4px;" width="3.2" height="2.1" viewBox="0 0 10 6"><path d="M0 0 H10 L5 6Z" fill="#505050"/></svg>
</aside>
<header id="global-header">
<svg class="b" style="left:-1px;top:-2px" width="847" height="46"><rect x="2" y="2.8" width="842.2" height="41" fill="#fff"/></svg>
<svg class="b" style="left:-1px;top:21px" width="847" height="6"><rect x="2" y="2.7" width="842.2" height="1" fill="#e8e8e8"/></svg>
<svg class="b" style="left:0px;top:0px;" width="40" height="24" viewBox="0 0 40 24"><g fill="#0896de"><circle cx="14.200" cy="7.900" r="4.600"/><circle cx="22" cy="7.600" r="3.800"/><circle cx="28.700" cy="11" r="5.500"/><circle cx="11.900" cy="13.800" r="4.300"/><circle cx="17.500" cy="17.400" r="4.600"/><circle cx="23.700" cy="15.200" r="4.100"/><circle cx="19.800" cy="11.800" r="5.600"/></g></svg>
<svg class="b" style="left:314px;top:3px" width="188" height="19"><rect x="2.45" y="2.75" width="182.6" height="13.5" rx="1.55" fill="#fff" stroke="#999999" stroke-width="0.9"/></svg>
<svg class="b" style="left:323.4px;top:9.5px;" width="6.8" height="6.8" viewBox="0 0 20 20"><circle cx="8.200" cy="8.200" r="6" fill="none" stroke="#747474" stroke-width="2.800"/><path d="M12.800 12.800 L18.200 18.200" stroke="#747474" stroke-width="3.200" stroke-linecap="round"/></svg>
<span class="t" style="left:333px;top:9px;font-size:6px;color:#7a7a7a;transform:translate(0.9px,-0.2px) rotate(.03deg) scale(1,1.12);">Search...</span>
<svg class="b" style="left:715px;top:4px" width="24" height="16"><rect x="2.95" y="3.35" width="18.4" height="9.8" rx="1.55" fill="#fff" stroke="#b4b4b4" stroke-width="0.9"/></svg>
<svg class="b" style="left:726px;top:5px" width="5" height="15"><rect x="2.2" y="2.2" width="0.7" height="10.1" fill="#b4b4b4"/></svg>
<svg class="b" style="left:719.9px;top:9px;" width="6.9" height="6.7" viewBox="0 0 20 19"><path d="M10 0 L12.900 6.300 L19.800 7.100 L14.700 11.800 L16.100 18.600 L10 15.200 L3.900 18.600 L5.300 11.800 L0.200 7.100 L7.100 6.300Z" fill="#8a8a8a"/></svg>
<svg class="b" style="left:730.5px;top:11.6px;" width="3.7" height="2.3" viewBox="0 0 10 6"><path d="M0 0 H10 L5 6Z" fill="#8a8a8a"/></svg>
<svg class="b" style="left:742px;top:6px" width="13" height="13"><rect x="2" y="2" width="8.9" height="8.8" rx="1.5" fill="#8c8c8c"/></svg>
<svg class="b" style="left:744px;top:8px;" width="8.9" height="8.8" viewBox="0 0 10 10"><path d="M5 1.700 V8.300 M1.700 5 H8.300" stroke="#fff" stroke-width="1.200" fill="none"/></svg>
<svg class="b" style="left:757.7px;top:7.9px;" width="9" height="9" viewBox="0 0 20 20"><path d="M10 0.500 C12.400 0.500 14.200 2.400 15.400 5 C18.200 6.600 19.800 9.600 19.400 12.800 C19 16.200 16.400 18.600 13 18.800 H7 C3.600 18.600 1 16.200 0.600 12.800 C0.200 9.600 1.800 6.600 4.600 5 C5.800 2.400 7.600 0.500 10 0.500Z" fill="#8c8c8c"/><path d="M3.600 14.600 L7.600 9.400 L10 12.400 L12.400 9.400 L16.400 14.600" fill="none" stroke="#fff" stroke-width="1.300"/><path d="M10 5 V9.600 M7.800 7.200 H12.200" stroke="#fff" stroke-width="1.100" fill="none"/></svg>
<span class="t" style="left:773px;top:7px;font-size:12px;color:#6c6c6c;transform:translate(0.8px,0.2px) rotate(.03deg);">?</span>
<svg class="b" style="left:787.2px;top:8.2px;" width="8.8" height="8.8" viewBox="0 0 20 20"><path fill="#505050" stroke="#505050" stroke-width="0.500" stroke-linejoin="round" d="M7.80 3.46 L8.40 -0.07 L11.60 -0.07 L12.20 3.46 L14.56 4.82 L17.93 3.58 L19.52 6.34 L16.76 8.64 L16.76 11.36 L19.52 13.66 L17.93 16.42 L14.56 15.18 L12.20 16.54 L11.60 20.07 L8.40 20.07 L7.80 16.54 L5.44 15.18 L2.07 16.42 L0.48 13.66 L3.24 11.36 L3.24 8.64 L0.48 6.34 L2.07 3.58 L5.44 4.82Z"/><circle cx="10" cy="10" r="4.200" fill="#fff"/><circle cx="10" cy="10" r="2" fill="#505050"/></svg>
<svg class="b" style="left:801.8px;top:8px;" width="9.3" height="9" viewBox="0 0 20 20"><path d="M10 0.500 C6.200 0.500 4.500 3.600 4.500 7 V10.500 C4.500 12.600 2.800 13.800 0.800 14.800 V16 H19.200 V14.800 C17.200 13.800 15.500 12.600 15.500 10.500 V7 C15.500 3.600 13.800 0.500 10 0.500Z" fill="#8f8f8f"/><path d="M7.800 17.400 H12.200 A2.200 2.200 0 0 1 7.800 17.400Z" fill="#8f8f8f"/></svg>
<svg class="b" style="left:818.8px;top:3px;" width="15.7" height="15.7" viewBox="0 0 100 100"><circle cx="50" cy="50" r="50" fill="#4a5f94"/><path d="M50 33 C67 33 75 43 75 62 C75 82 66 94 50 94 C34 94 25 82 25 62 C25 43 33 33 50 33Z" fill="#fff"/><ellipse cx="27" cy="27" rx="7" ry="4.500" fill="#fff"/><ellipse cx="73" cy="27" rx="7" ry="4.500" fill="#fff"/><ellipse cx="49" cy="46" rx="10.500" ry="6" fill="#4a5f94"/></svg>
</header>
<nav id="app-nav">
<svg class="b" style="left:-1px;top:38px" width="847" height="7"><rect x="2" y="2.85" width="842.2" height="1.6" fill="#1f5ace"/></svg>
<svg class="b" style="left:14.2px;top:28px;" width="10" height="10" viewBox="0 0 10 10"><circle cx="1.4" cy="1.4" r="1.200" fill="#747474"/><circle cx="5.0" cy="1.4" r="1.200" fill="#747474"/><circle cx="8.6" cy="1.4" r="1.200" fill="#747474"/><circle cx="1.4" cy="5.0" r="1.200" fill="#747474"/><circle cx="5.0" cy="5.0" r="1.200" fill="#747474"/><circle cx="8.6" cy="5.0" r="1.200" fill="#747474"/><circle cx="1.4" cy="8.6" r="1.200" fill="#747474"/><circle cx="5.0" cy="8.6" r="1.200" fill="#747474"/><circle cx="8.6" cy="8.6" r="1.200" fill="#747474"/></svg>
<span class="t" style="left:31px;top:29px;font-size:8.22px;color:#2e2e2e;transform:translate(0.8px,0.07px) rotate(.03deg) scale(1,1.03);">Contact Center in …</span>
<svg class="b" style="left:119px;top:22px" width="6" height="21"><rect x="2.5" y="2.8" width="0.9" height="16.1" fill="#e4e4e4"/></svg>
<span class="t" style="left:127px;top:30px;font-size:6px;color:#181818;transform:translate(0.9px,-0.6px) rotate(.03deg) scale(1,1.12);">Voice Calls</span>
<svg class="b" style="left:185px;top:22px" width="6" height="21"><rect x="2.3" y="2.8" width="0.9" height="16.1" fill="#e4e4e4"/></svg>
<svg class="b" style="left:194.1px;top:30.9px;" width="6.4" height="3.9" viewBox="0 0 10 7"><path d="M1 1.200 L5 5.400 L9 1.200" fill="none" stroke="#5c5c5c" stroke-width="1.3"/></svg>
<svg class="b" style="left:204px;top:22px" width="107" height="21"><rect x="2.5" y="2.1" width="101.6" height="16.8" fill="#e7eefc"/></svg>
<svg class="b" style="left:204px;top:22px" width="107" height="6"><rect x="2.5" y="2.1" width="101.6" height="1.7" fill="#2f66d4"/></svg>
<svg class="b" style="left:212.5px;top:28.9px;" width="6.7" height="6.9" viewBox="3 3 18 18"><path fill="#5c5c5c" d="M6.6 10.8c1.4 2.8 3.8 5.1 6.6 6.6l2.2-2.2c.3-.3.7-.4 1-.2 1.1.4 2.3.6 3.6.6.6 0 1 .4 1 1V20c0 .6-.4 1-1 1C10.600 21 3 13.400 3 4c0-.6.4-1 1-1h3.500c.6 0 1 .4 1 1 0 1.300.2 2.500.6 3.600.1.300 0 .7-.3 1l-2.200 2.200z"/></svg>
<span class="t" style="left:221px;top:30px;font-size:6px;color:#181818;transform:translate(0.5px,-0.6px) rotate(.03deg) scale(1,1.12);">VC-00000135</span>
<svg class="b" style="left:287.6px;top:31.6px;" width="5" height="3.5" viewBox="0 0 10 7"><path d="M1 1.200 L5 5.400 L9 1.200" fill="none" stroke="#5c5c5c" stroke-width="1.7"/></svg>
<svg class="b" style="left:297px;top:30.9px;" width="4.9" height="4.9" viewBox="0 0 10 10"><path d="M1 1 L9 9 M9 1 L1 9" fill="none" stroke="#5c5c5c" stroke-width="1.5"/></svg>
</nav>
<div id="setup-menu" role="menu" aria-label="Setup Menu">
<svg class="b" style="left:708px;top:22px" width="98" height="136"><path d="M2.6 2.3 H95.3 V131.1 A2.4 2.4 0 0 1 92.9 133.5 H5 A2.4 2.4 0 0 1 2.6 131.1 V2.3 Z" fill="rgba(0,0,0,0.07)"/></svg>
<svg class="b" style="left:708px;top:22px" width="97" height="136"><path d="M2.6 2.6 H95.3 V132 A2 2 0 0 1 93.3 134 H4.6 A2 2 0 0 1 2.6 132 V2.6 Z" fill="rgba(0,0,0,0.16)"/><path d="M2.9 2.4 H95 V131.1 A2 2 0 0 1 93 133.1 H4.9 A2 2 0 0 1 2.9 131.1 V2.4 Z" fill="#fff"/></svg>
<svg class="b" style="left:784.4px;top:18.4px;" width="12.4" height="6.6" viewBox="0 0 12.400 6.600"><path d="M0.400 6.400 L6.200 0.600 L12 6.400" fill="#fff" stroke="#e6e6e6" stroke-width="0.700"/><rect x="0.800" y="5.900" width="10.800" height="0.700" fill="#fff"/></svg>
<span class="t" style="left:715px;top:30px;font-size:6px;color:#181818;transform:translate(0.8px,-0.6px) rotate(.03deg) scale(1,1.12);">Setup Menu</span>
<svg class="b" style="left:792.7px;top:30.8px;" width="4.5" height="4.5" viewBox="0 0 10 10"><path d="M1 1 L9 9 M9 1 L1 9" fill="none" stroke="#6a6a6a" stroke-width="1.3"/></svg>
<svg class="b" style="left:708px;top:36px" width="97" height="6"><rect x="2.9" y="2.9" width="92.1" height="0.9" fill="#e0e0e0"/></svg>
<svg class="b" style="left:717.1px;top:43.8px;" width="10.2" height="10.2" viewBox="0 0 20 20"><path fill="#0d6fa3" stroke="#0d6fa3" stroke-width="1" stroke-linejoin="round" d="M7.80 3.46 L8.40 -0.07 L11.60 -0.07 L12.20 3.46 L14.56 4.82 L17.93 3.58 L19.52 6.34 L16.76 8.64 L16.76 11.36 L19.52 13.66 L17.93 16.42 L14.56 15.18 L12.20 16.54 L11.60 20.07 L8.40 20.07 L7.80 16.54 L5.44 15.18 L2.07 16.42 L0.48 13.66 L3.24 11.36 L3.24 8.64 L0.48 6.34 L2.07 3.58 L5.44 4.82Z"/><circle cx="10" cy="10" r="3.900" fill="#fff"/><path d="M11 6.600 L8 10.600 H9.900 L9 13.600 L12.100 9.300 H10.200Z" fill="#0d6fa3"/></svg>
<span class="t" style="left:733px;top:47px;font-size:5.55px;color:#181818;font-weight:700;transform:translate(0.1px,-0.27px) rotate(.03deg) scale(1,1.13);">Setup</span>
<span class="t" style="left:716px;top:60px;font-size:4.6px;color:#525252;transform:translate(0.8px,0.14px) rotate(.03deg) scale(1,1.12);">Setup for current app</span>
<svg class="b" style="left:708px;top:71px" width="97" height="6"><rect x="2.9" y="2.9" width="92.1" height="0.9" fill="#e0e0e0"/></svg>
<svg class="b" style="left:717.1px;top:82.3px;" width="10.2" height="10.2" viewBox="0 0 20 20"><path fill="#9a10c2" stroke="#9a10c2" stroke-width="1" stroke-linejoin="round" d="M7.80 3.46 L8.40 -0.07 L11.60 -0.07 L12.20 3.46 L14.56 4.82 L17.93 3.58 L19.52 6.34 L16.76 8.64 L16.76 11.36 L19.52 13.66 L17.93 16.42 L14.56 15.18 L12.20 16.54 L11.60 20.07 L8.40 20.07 L7.80 16.54 L5.44 15.18 L2.07 16.42 L0.48 13.66 L3.24 11.36 L3.24 8.64 L0.48 6.34 L2.07 3.58 L5.44 4.82Z"/><circle cx="10" cy="10" r="3.900" fill="#fff"/><path d="M11 6.600 L8 10.600 H9.900 L9 13.600 L12.100 9.300 H10.200Z" fill="#9a10c2"/></svg>
<span class="t" style="left:733px;top:85px;font-size:5.55px;color:#181818;transform:translate(0.4px,0.27px) rotate(.03deg) scale(1,1.12);">Service Setup</span>
<span class="t" style="left:716px;top:103px;font-size:5.55px;color:#181818;transform:translate(0.8px,-0.48px) rotate(.03deg) scale(1,1.12);">Developer Console</span>
<svg class="b" style="left:708px;top:114px" width="97" height="6"><rect x="2.9" y="2.4" width="92.1" height="0.9" fill="#e0e0e0"/></svg>
<svg class="b" style="left:710px;top:119px" width="95" height="19"><rect x="2.73" y="3.53" width="88.95" height="12.65" rx="0.57" fill="#f3f3f3" stroke="#2b59bf" stroke-width="1.25"/></svg>
<span class="t" style="left:716px;top:127px;font-size:5.55px;color:#181818;transform:translate(0.8px,-0.48px) rotate(.03deg) scale(1,1.12);">Edit Page</span>
<span class="t" style="left:716px;top:143px;font-size:5.5px;color:#181818;transform:translate(0.8px,-0.18px) rotate(.03deg) scale(1,1.12);">Edit Object</span>
</div>
<div id="window-chrome" aria-hidden="true">
<svg class="b" style="left:841px;top:-2px" width="11" height="429"><rect x="2.2" y="2.9" width="6.8" height="424.1" fill="#f1f1f1"/></svg>
<svg class="b" style="left:842px;top:6px" width="10" height="296"><rect x="2.3" y="2.1" width="4.8" height="291.8" fill="#c1c1c1"/></svg>
<svg class="b" style="left:844.9px;top:3.8px;" width="3.4" height="2.2" viewBox="0 0 10 6"><path d="M0 6 H10 L5 0Z" fill="#8a8a8a"/></svg>
<svg class="b" style="left:-2px;top:-2px" width="854" height="5"><rect x="2" y="2" width="850" height="0.95" fill="#544734"/></svg>
<svg class="b" style="left:-2px;top:-2px" width="6" height="429"><rect x="2" y="2.9" width="1.1" height="424.1" fill="#8a8a8a"/></svg>
</div>
</div>
</body>
</html>
